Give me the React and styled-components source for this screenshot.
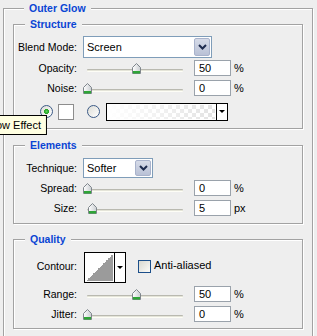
import React from 'react';
import styled, { createGlobalStyle } from 'styled-components';

const GlobalStyle = createGlobalStyle`
  html, body {
    margin: 0;
    background: #eeeeee;
  }
  body {
    font-family: "Liberation Sans", Arial, sans-serif;
    font-size: 10.5px;
    color: #000;
  }
`;

function Thumb() {
    return (
        <svg width="9" height="11" viewBox="0 0 9 11">
            <defs>
                <linearGradient id="thumbFill" x1="0" y1="0" x2="1" y2="0">
                    <stop offset="0" stopColor="#ffffff" />
                    <stop offset="1" stopColor="#c9cdd1" />
                </linearGradient>
            </defs>
            <path d="M0.5 4.5 L4.5 0.5 L8.5 4.5 V10.5 H0.5 Z" fill="url(#thumbFill)" stroke="#7f868c" />
            <rect x="1" y="8" width="7" height="2.5" fill="#2fa537" />
        </svg>
    );
}

function Chevron() {
    return (
        <svg width="9" height="6" viewBox="0 0 9 6">
            <polyline points="1,1 4.5,4.5 8,1" fill="none" stroke="#1d2b4e" strokeWidth="2" />
        </svg>
    );
}

function Select({ value, width }) {
    return (
        <SelectBox $width={width}>
            <SelectValue>{value}</SelectValue>
            <SelectButton><Chevron /></SelectButton>
        </SelectBox>
    );
}

function Slider({ value }) {
    return (
        <SliderBox>
            <Track />
            <ThumbSpot style={{ left: 1 + value * 0.98 }}><Thumb /></ThumbSpot>
        </SliderBox>
    );
}

function SliderRow({ label, value, unit }) {
    return (
        <Row $h={20}>
            <Label>{label}</Label>
            <Slider value={value} />
            <NumField>{value}</NumField>
            <Unit>{unit}</Unit>
        </Row>
    );
}

function App() {
    return (
        <Page>
            <GlobalStyle />
            <Group $pb={40} $px={9}>
                <Legend>Outer Glow</Legend>

                <Group $mt={9} $pb={7}>
                    <Legend>Structure</Legend>
                    <Row $h={22} $mt={5}>
                        <Label>Blend Mode:</Label>
                        <Select value="Screen" width={129} />
                    </Row>
                    <SliderRow label="Opacity:" value={50} unit="%" />
                    <SliderRow label="Noise:" value={0} unit="%" />
                    <ColorRow>
                        <Radio $on />
                        <Swatch />
                        <Radio />
                        <GradientPick>
                            <GradientPreview />
                            <SmallArrow><Tri /></SmallArrow>
                        </GradientPick>
                    </ColorRow>
                </Group>

                <Group $mt={16} $pb={5}>
                    <Legend>Elements</Legend>
                    <Row $h={20} $mt={6}>
                        <Label>Technique:</Label>
                        <Select value="Softer" width={70} />
                    </Row>
                    <SliderRow label="Spread:" value={0} unit="%" />
                    <SliderRow label="Size:" value={5} unit="px" />
                </Group>

                <Group $mt={15} $pb={4}>
                    <Legend>Quality</Legend>
                    <Row $h={32} $mt={6} $align="flex-start">
                        <Label $top={8}>Contour:</Label>
                        <ContourPick>
                            <ContourPreview><ContourShape /></ContourPreview>
                            <SmallArrow><Tri /></SmallArrow>
                        </ContourPick>
                        <CheckBox />
                        <CheckLabel>Anti-aliased</CheckLabel>
                    </Row>
                    <SliderRow label="Range:" value={50} unit="%" />
                    <SliderRow label="Jitter:" value={0} unit="%" />
                </Group>
            </Group>

            <Tooltip>Glow Effect</Tooltip>
        </Page>
    );
}

const Page = styled.div`
    position: relative;
    width: 317px;
    height: 336px;
    overflow: hidden;
    box-sizing: border-box;
    padding: 8px 0 0 3px;
`

const Group = styled.div`
    width: ${p => (p.$px ? '310px' : 'auto')};
    box-sizing: border-box;
    margin-top: ${p => p.$mt || 0}px;
    padding: 0 ${p => p.$px || 0}px ${p => p.$pb || 0}px;
    border: 1px solid #a2a2a2;
    box-shadow: inset 1px 1px 0 #fff, 1px 1px 0 #fff;
`

const Legend = styled.div`
    display: table;
    margin: -8px 0 0 11px;
    padding: 0 5px;
    background: #eeeeee;
    line-height: 14px;
    font-size: 10.5px;
    font-weight: bold;
    color: #0a45d4;
`

const Row = styled.div`
    display: flex;
    align-items: ${p => p.$align || 'center'};
    height: ${p => p.$h}px;
    margin-top: ${p => p.$mt || 0}px;
`

const Label = styled.div`
    width: 64px;
    flex: none;
    box-sizing: border-box;
    padding-right: 1px;
    margin-top: ${p => p.$top || 0}px;
    text-align: right;
    white-space: nowrap;
`

const SelectBox = styled.div`
    display: flex;
    width: ${p => p.$width}px;
    height: 100%;
    margin-left: 5px;
    box-sizing: border-box;
    border: 1px solid #7f9db9;
    background: #fff;
`

const SelectValue = styled.div`
    flex: 1;
    display: flex;
    align-items: center;
    padding-left: 3px;
    font-size: 11px;
`

const SelectButton = styled.div`
    width: 16px;
    display: flex;
    align-items: center;
    justify-content: center;
    box-sizing: border-box;
    margin: 1px;
    border: 1px solid #a9b3cc;
    border-radius: 2px;
    background: linear-gradient(#d6dbe8, #b9c1d6);
`

const SliderBox = styled.div`
    position: relative;
    width: 106px;
    height: 20px;
    margin-left: 4px;
    flex: none;
`

const Track = styled.div`
    margin: 11px 5px 0;
    height: 1px;
    border-top: 1px solid #b9b9b0;
    border-bottom: 1px solid #fdfdf6;
    background: #e4e4d8;
    border-radius: 1px;
`

const ThumbSpot = styled.div`
    position: absolute;
    top: 5px;
    width: 9px;
    height: 11px;
    line-height: 0;
`

const NumField = styled.div`
    width: 37px;
    height: 16px;
    box-sizing: border-box;
    margin-left: 6px;
    padding-left: 4px;
    border: 1px solid #9aa2ab;
    background: #fff;
    line-height: 14px;
    font-size: 11px;
`

const Unit = styled.div`
    margin-left: 3px;
    font-size: 11px;
`

const ColorRow = styled.div`
    display: flex;
    align-items: center;
    height: 19px;
    margin-top: 4px;
    padding-left: 26px;
`

const Radio = styled.div`
    width: 13px;
    height: 13px;
    box-sizing: border-box;
    border-radius: 50%;
    border: 1px solid #3b5a86;
    background: ${p => p.$on
        ? 'radial-gradient(circle, #5ed35e 0, #22a322 2.2px, transparent 2.8px), linear-gradient(135deg, #dcdcd6, #ffffff)'
        : 'linear-gradient(135deg, #dcdcd6, #ffffff)'};
    margin-right: ${p => (p.$on ? 5 : 6)}px;
`

const Swatch = styled.div`
    width: 16px;
    height: 16px;
    box-sizing: border-box;
    border: 1px solid #8d8d8d;
    background: #fff;
    margin-right: 13px;
`

const GradientPick = styled.div`
    display: flex;
    width: 122px;
    height: 18px;
    box-sizing: border-box;
    border: 1px solid #000;
    background: #fff;
`

const GradientPreview = styled.div`
    flex: 1;
    margin: 1px;
    background:
        linear-gradient(to right, #fff 0%, rgba(255, 255, 255, 0.2) 100%),
        repeating-conic-gradient(#dcdcdc 0 25%, #ffffff 0 50%) 0 0 / 8px 8px;
`

const SmallArrow = styled.div`
    width: 10px;
    display: flex;
    align-items: center;
    justify-content: center;
    border-left: 1px solid #000;
    background: #fff;
`

const Tri = styled.div`
    width: 0;
    height: 0;
    border-left: 3px solid transparent;
    border-right: 3px solid transparent;
    border-top: 3px solid #000;
`

const ContourPick = styled.div`
    display: flex;
    width: 42px;
    height: 31px;
    box-sizing: border-box;
    margin-left: 6px;
    border: 1px solid #000;
    background: #fff;
`

const ContourPreview = styled.div`
    flex: 1;
    padding: 1px;
`

const ContourShape = styled.div`
    width: 100%;
    height: 100%;
    background: linear-gradient(to bottom right, #fff 50%, #9b9b9b 50%);
`

const CheckBox = styled.div`
    width: 13px;
    height: 13px;
    box-sizing: border-box;
    margin: 8px 0 0 12px;
    border: 1px solid #1c4f8a;
    background: linear-gradient(135deg, #d8d8d0, #fbfbf8);
`

const CheckLabel = styled.div`
    margin: 7px 0 0 3px;
    font-size: 11px;
`

const Tooltip = styled.div`
    position: absolute;
    top: 115px;
    left: 47px;
    transform: translateX(-100%);
    height: 20px;
    box-sizing: border-box;
    padding: 0 5px 0 4px;
    border: 1px solid #000;
    background: #ffffe1;
    line-height: 18px;
    font-size: 11px;
    white-space: nowrap;
`

export default App
